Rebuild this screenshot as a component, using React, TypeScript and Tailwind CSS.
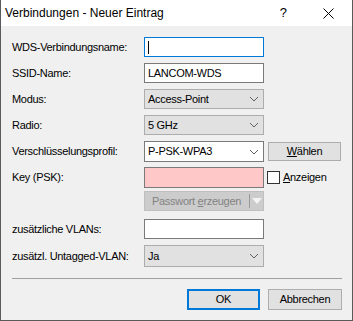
import React from 'react';

const font = { fontFamily: '"Liberation Sans", Arial, sans-serif' };

const Chevron: React.FC<{ color?: string }> = ({ color = '#606060' }) => (
  <svg width="10" height="6" viewBox="0 0 10 6" className="shrink-0">
    <path d="M1 1 L5 5 L9 1" fill="none" stroke={color} strokeWidth="1" />
  </svg>
);

const Label: React.FC<{ children: React.ReactNode }> = ({ children }) => (
  <div className="w-[132px] shrink-0 text-[11px] tracking-[-0.3px] text-black">{children}</div>
);

const Select: React.FC<{ value: string }> = ({ value }) => (
  <div className="flex h-[20px] w-[120px] items-center justify-between border border-[#adadad] bg-[#e1e1e1] pl-[3px] pr-[4px] text-[11px] tracking-[-0.3px] text-black">
    <span>{value}</span>
    <Chevron />
  </div>
);

export default function App() {
  return (
    <div style={font} className="flex h-[321px] w-[353px] flex-col border border-t-0 border-[#5a5a5a] bg-[#f0f0f0] select-none">
      {/* Title bar */}
      <div className="flex h-[26px] shrink-0 items-center bg-white pl-[4px] text-[12px] text-black">
        <span className="flex-1">Verbindungen - Neuer Eintrag</span>
        <span className="mr-[36px] text-[13px]">?</span>
        <svg width="11" height="11" viewBox="0 0 11 11" className="mr-[18px]">
          <path d="M0.5 0.5 L10.5 10.5 M10.5 0.5 L0.5 10.5" stroke="#000" strokeWidth="1" />
        </svg>
      </div>

      {/* Form */}
      <div className="flex flex-col pl-[11px] pt-[11px]">
        <div className="flex h-[20px] items-center">
          <Label>WDS-Verbindungsname:</Label>
          <div className="flex h-[20px] w-[120px] items-center border border-[#0078d7] bg-white pl-[3px]">
            <div className="h-[13px] w-px bg-black" />
          </div>
        </div>

        <div className="mt-[6px] flex h-[20px] items-center">
          <Label>SSID-Name:</Label>
          <div className="flex h-[20px] w-[120px] items-center border border-[#7a7a7a] bg-white pl-[3px] text-[11px] tracking-[-0.3px] text-black">
            LANCOM-WDS
          </div>
        </div>

        <div className="mt-[6px] flex h-[20px] items-center">
          <Label>Modus:</Label>
          <Select value="Access-Point" />
        </div>

        <div className="mt-[6px] flex h-[20px] items-center">
          <Label>Radio:</Label>
          <Select value="5 GHz" />
        </div>

        <div className="mt-[6px] flex h-[21px] items-center">
          <Label>Verschlüsselungsprofil:</Label>
          <div className="flex h-[21px] w-[120px] items-center justify-between border border-[#7a7a7a] bg-white pl-[3px] pr-[4px] text-[11px] tracking-[-0.3px] text-black">
            <span>P-PSK-WPA3</span>
            <Chevron />
          </div>
          <div className="ml-[4px] flex h-[19px] w-[73px] items-center justify-center border border-[#adadad] bg-[#e1e1e1] text-[11px] tracking-[-0.3px] text-black">
            <span><span className="underline">W</span>ählen</span>
          </div>
        </div>

        <div className="mt-[5px] flex h-[21px] items-center">
          <Label>Key (PSK):</Label>
          <div className="h-[21px] w-[120px] border border-[#7a7a7a] bg-[#ffc8c8]" />
          <div className="ml-[3px] h-[13px] w-[13px] border border-[#333333] bg-white" />
          <span className="ml-[3px] text-[11px] tracking-[-0.3px] text-black"><span className="underline">A</span>nzeigen</span>
        </div>

        <div className="mt-[3px] flex h-[20px] items-center">
          <div className="w-[132px] shrink-0" />
          <div className="flex h-[20px] w-[120px] items-center border border-[#bfbfbf] bg-[#cccccc] text-[11px] tracking-[-0.3px] text-[#838383]">
            <span className="w-[104px] pl-[7px]">Passwort <span className="underline">e</span>rzeugen</span>
            <div className="h-[14px] w-px bg-[#9a9a9a]" />
            <svg width="12" height="8" viewBox="0 0 12 8" className="ml-[1px]">
              <path d="M1 1 L11 1 L6 7 Z" fill="#f4f4f4" />
            </svg>
          </div>
        </div>

        <div className="mt-[8px] flex h-[20px] items-center">
          <Label>zusätzliche VLANs:</Label>
          <div className="h-[20px] w-[120px] border border-[#7a7a7a] bg-white" />
        </div>

        <div className="mt-[6px] flex h-[22px] items-center">
          <Label>zusätzl. Untagged-VLAN:</Label>
          <div className="flex h-[22px] w-[120px] items-center justify-between border border-[#adadad] bg-[#e1e1e1] pl-[3px] pr-[4px] text-[11px] tracking-[-0.3px] text-black">
            <span>Ja</span>
            <Chevron />
          </div>
        </div>

        <div className="mt-[11px] mr-[10px] h-px bg-[#a0a0a0]" />

        <div className="mt-[10px] mr-[10px] flex justify-end">
          <div className="flex h-[21px] w-[73px] items-center justify-center border-2 border-[#0078d7] bg-[#e1e1e1] text-[11px] tracking-[-0.3px] text-black">
            OK
          </div>
          <div className="ml-[8px] flex h-[21px] w-[74px] items-center justify-center border border-[#adadad] bg-[#e1e1e1] text-[11px] tracking-[-0.3px] text-black">
            Abbrechen
          </div>
        </div>
      </div>
    </div>
  );
}
